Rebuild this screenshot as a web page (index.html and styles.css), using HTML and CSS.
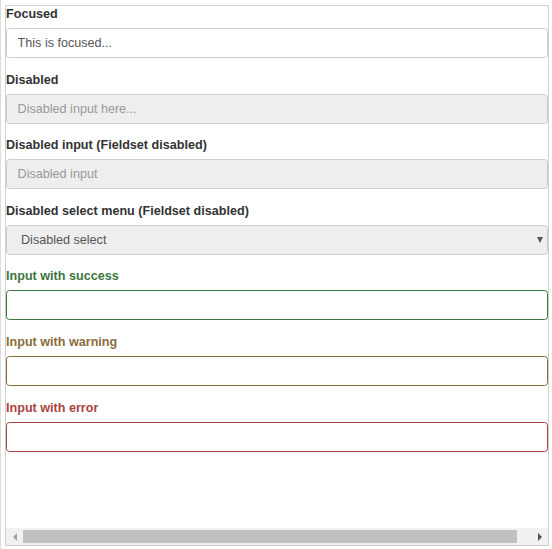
FILE: index.html
```html
<!DOCTYPE html>
<html>
<head>
<meta charset="utf-8">
<link rel="stylesheet" href="styles.css">
</head>
<body>
<div class="stage">
  <div class="frame">
    <div class="content">
      <div class="form-group">
        <label class="label">Focused</label>
        <input class="control" type="text" value="This is focused...">
      </div>
      <div class="form-group">
        <label class="label">Disabled</label>
        <input class="control" type="text" placeholder="Disabled input here..." disabled>
      </div>
      <fieldset class="fieldset" disabled>
        <div class="form-group">
          <label class="label">Disabled input (Fieldset disabled)</label>
          <input class="control" type="text" placeholder="Disabled input">
        </div>
        <div class="form-group">
          <label class="label">Disabled select menu (Fieldset disabled)</label>
          <div class="select-wrap">
            <select class="control select"><option>Disabled select</option></select>
          </div>
        </div>
      </fieldset>
      <div class="form-group has-success">
        <label class="label">Input with success</label>
        <input class="control" type="text">
      </div>
      <div class="form-group has-warning">
        <label class="label">Input with warning</label>
        <input class="control" type="text">
      </div>
      <div class="form-group has-error">
        <label class="label">Input with error</label>
        <input class="control" type="text">
      </div>
    </div>
    <div class="hscroll">
      <div class="sb-btn"><span class="tri-left"></span></div>
      <div class="sb-track"><div class="sb-thumb"></div></div>
      <div class="sb-btn"><span class="tri-right"></span></div>
    </div>
  </div>
</div>
</body>
</html>
```
FILE: styles.css
```css
* { box-sizing: border-box; }
html, body { margin: 0; padding: 0; background: #fff; }
body {
  font-family: "Liberation Sans", Arial, sans-serif;
  font-size: 12.6px;
  color: #333;
}
.stage {
  margin-left: 0;
  border-left: 1px solid #dcdcdc;
  padding: 5px 0 0 4px;
  height: 549px;
}
.frame {
  width: 544px;
  height: 541px;
  border: 1px solid #d0d0d0;
  display: flex;
  flex-direction: column;
  overflow: hidden;
}
.content { flex: 1; }
.fieldset { border: 0; margin: 0; padding: 0; min-width: 0; }
.form-group { margin-bottom: 13.5px; }
.label {
  display: block;
  font-weight: bold;
  line-height: 17.7px;
  margin-bottom: 4.4px;
  color: #333;
}
.control {
  display: block;
  width: 100%;
  height: 30px;
  padding: 0 10.6px;
  font-family: "Liberation Sans", Arial, sans-serif;
  font-size: 12.6px;
  color: #555;
  background: #fff;
  border: 1px solid #ccc;
  border-radius: 3.5px;
  outline: none;
  margin: 0;
}
.control::placeholder { color: #999; }
.control:disabled { background: #eee; }
.select-wrap { position: relative; }
.select {
  -webkit-appearance: none;
  appearance: none;
  padding-left: 14px;
  color: #555;
  opacity: 1;
}
.select-wrap::after {
  content: "";
  position: absolute;
  right: 5px;
  top: 12px;
  border-left: 3.5px solid transparent;
  border-right: 3.5px solid transparent;
  border-top: 6px solid #555;
}
.has-success .label { color: #3c763d; }
.has-success .control { border-color: #3c763d; }
.has-warning .label { color: #8a6d3b; }
.has-warning .control { border-color: #8a6d3b; }
.has-error .label { color: #a94442; }
.has-error .control { border-color: #a94442; }

.hscroll {
  height: 17px;
  background: #f1f1f1;
  display: flex;
  flex: none;
}
.sb-btn {
  width: 17px;
  display: flex;
  align-items: center;
  justify-content: center;
}
.tri-left {
  border-top: 4px solid transparent;
  border-bottom: 4px solid transparent;
  border-right: 4px solid #a3a3a3;
}
.tri-right {
  border-top: 4px solid transparent;
  border-bottom: 4px solid transparent;
  border-left: 4px solid #505050;
}
.sb-track { flex: 1; padding: 2px 0; }
.sb-thumb { width: 494px; height: 100%; background: #c1c1c1; }
```
